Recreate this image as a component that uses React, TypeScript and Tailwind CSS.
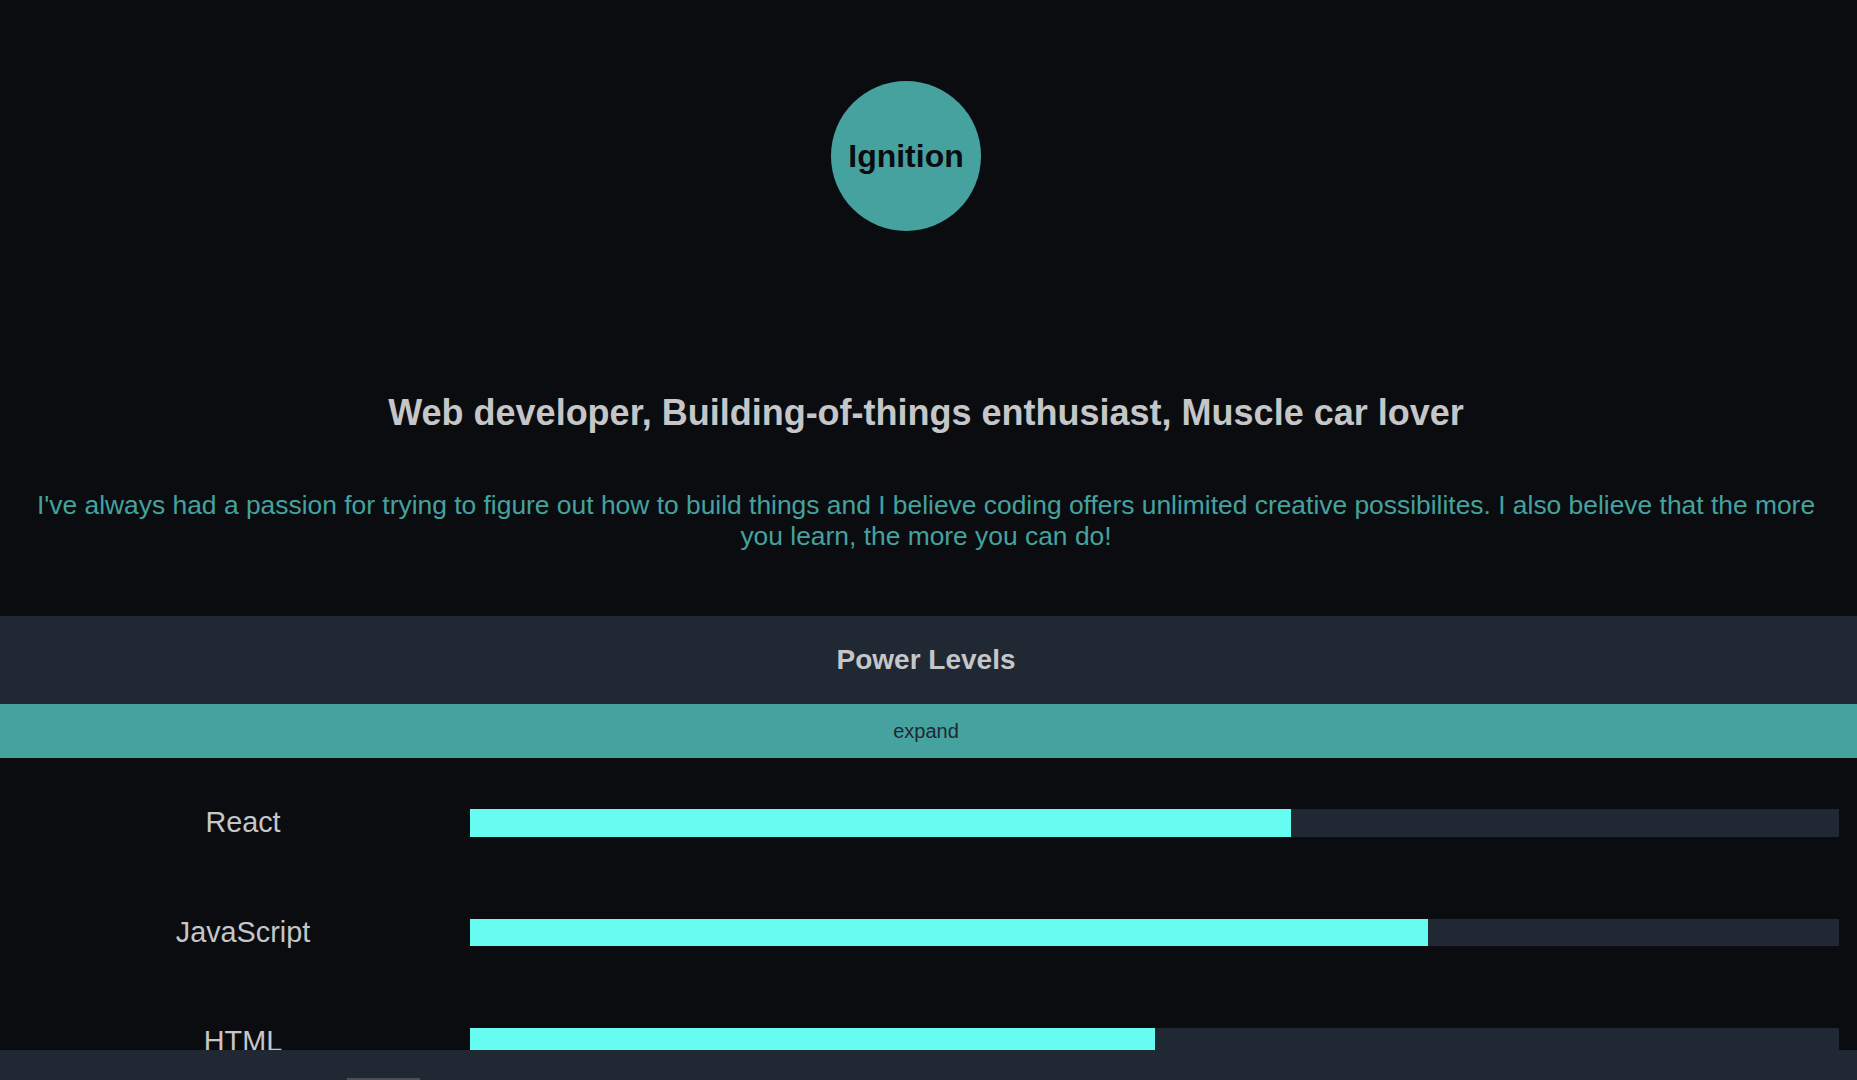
import React, { useState } from 'react';

const skills = [
  { name: 'React', level: 60 },
  { name: 'JavaScript', level: 70 },
  { name: 'HTML', level: 50 },
  { name: 'CSS', level: 65 },
  { name: 'Node', level: 45 },
];

const SkillRow: React.FC<{ name: string; level: number }> = ({ name, level }) => (
  <div className="flex items-center h-[109.5px] pl-4 pr-[18px]">
    <div className="w-[454px] text-center text-[28.8px] leading-none text-[#c5c6c7]">{name}</div>
    <div className="flex-1 h-[27.5px] bg-[#1f2833]">
      <div className="h-full bg-[#66fcf1]" style={{ width: `${level}%` }} />
    </div>
  </div>
);

const App: React.FC = () => {
  const [expanded, setExpanded] = useState(false);

  return (
    <div className="min-h-screen bg-[#0b0c10] font-['Liberation_Sans',Arial,sans-serif] pb-[30px]">
      {/* Logo */}
      <header className="flex justify-center pt-[81px]">
        <div className="mr-[45px] w-[150px] h-[150px] rounded-full bg-[#45a29e] flex items-center justify-center">
          <span className="text-[32px] font-bold text-[#0b0c10] leading-none">Ignition</span>
        </div>
      </header>

      {/* About */}
      <section className="pr-[5px]">
        <h1 className="mt-[164px] text-center text-[36px] leading-none font-bold text-[#c5c6c7]">
          Web developer, Building-of-things enthusiast, Muscle car lover
        </h1>
        <p className="mt-[59px] px-8 text-center text-[26.4px] leading-[31px] text-[#45a29e]">
          I've always had a passion for trying to figure out how to build things and I believe coding offers unlimited
          creative possibilites. I also believe that the more you learn, the more you can do!
        </p>
      </section>

      {/* Power levels */}
      <section className="mt-[64px]">
        <div className="h-[88px] bg-[#1f2833] flex items-center justify-center pr-[5px]">
          <h2 className="text-[28px] font-bold text-[#c5c6c7] leading-none">Power Levels</h2>
        </div>
        <button
          onClick={() => setExpanded(!expanded)}
          className="w-full h-[54px] bg-[#45a29e] text-[20px] text-[#1f2833] pr-[5px] cursor-pointer"
        >
          {expanded ? 'collapse' : 'expand'}
        </button>
        <div className="pt-[10px]">
          {skills.map((s) => (
            <SkillRow key={s.name} name={s.name} level={s.level} />
          ))}
        </div>
      </section>

      {/* Bottom bar */}
      <footer className="fixed bottom-0 left-0 right-0 h-[30px] bg-[#1f2833] overflow-hidden">
        <div className="pl-[347px] pt-[28px]">
          <div className="w-[73px] h-[10px] bg-[#4b4f55]" />
        </div>
      </footer>
    </div>
  );
};

export default App;
